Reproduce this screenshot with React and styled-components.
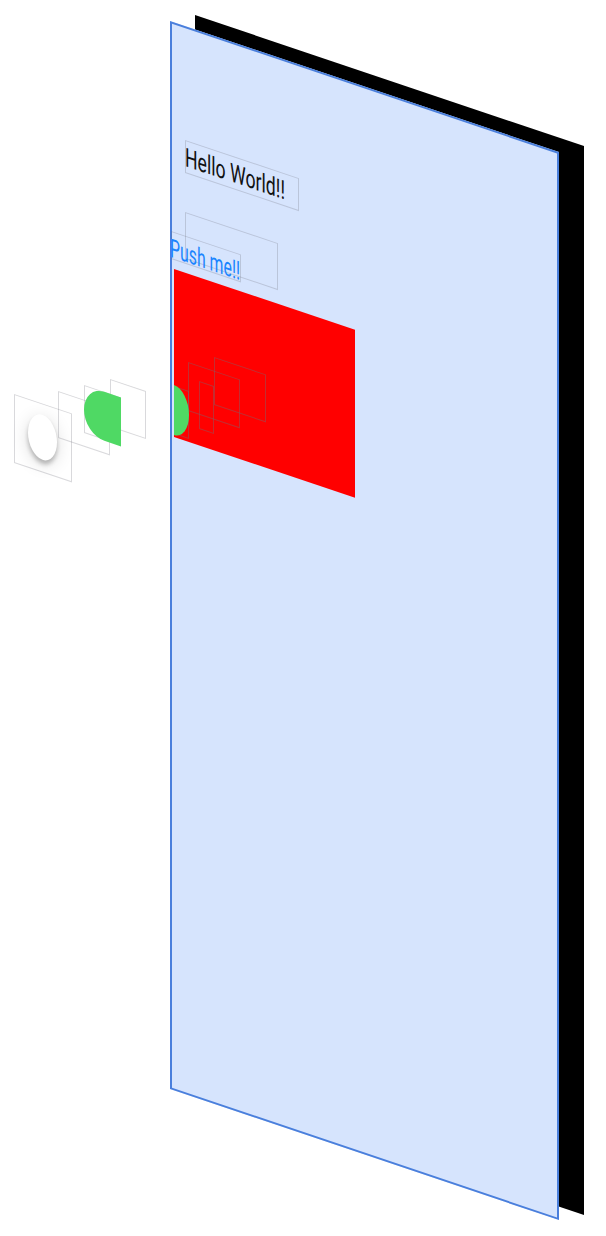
import React from "react";
import styled, { createGlobalStyle } from "styled-components";

const Global = createGlobalStyle`
  html, body { margin: 0; padding: 0; background: #fff; }
  #root { width: 606px; height: 1236px; overflow: hidden; }
`;

const Canvas = styled.div`
  position: relative;
  width: 606px;
  height: 1236px;
  background: #fff;
  overflow: hidden;
  font-family: Roboto, "Liberation Sans", sans-serif;
`;

const Layer = styled.div`
  position: absolute;
  left: ${(p) => p.$x}px;
  top: ${(p) => p.$y}px;
  width: ${(p) => p.$w}px;
  height: ${(p) => p.$h}px;
  box-sizing: border-box;
  transform-origin: 0 0;
  transform: matrix(1, ${(p) => p.$slope ?? 0.335}, 0, 1, 0, 0);
`;

const Backing = styled(Layer)`
  background: #000;
`;

const Panel = styled(Layer)`
  background: #d6e4fd;
  border: 2px solid #4a7fdc;
`;

const RedView = styled(Layer)`
  background: #ff0000;
`;

const Wire = styled(Layer)`
  border: 1.5px solid rgba(110, 110, 120, ${(p) => p.$alpha ?? 0.26});
`;

const Caption = styled(Wire)`
  display: flex;
  align-items: center;
  padding-top: ${(p) => p.$drop ?? 0}px;
  white-space: nowrap;
  font-size: ${(p) => p.$size}px;
  line-height: 1;
  color: ${(p) => p.$color};
`;

const CaptionText = styled.span`
  display: inline-block;
  margin-left: ${(p) => p.$nudge ?? 0}px;
  transform-origin: 0 50%;
  transform: scaleX(${(p) => p.$squeeze});
`;

const GreenBlob = styled(Layer)`
  background: #4fd964;
  border-radius: ${(p) => (p.$side === "right" ? "0 100% 100% 0 / 0 50% 50% 0" : "55% 0 0 55% / 50% 0 0 50%")};
`;

const Knob = styled(Layer)`
  background: #fff;
  border-radius: 50%;
  box-shadow: 0 4px 4px rgba(0, 0, 0, 0.24), 0 4px 18px rgba(0, 0, 0, 0.14);
`;

export default function App() {
  return (
    <Canvas>
      <Global />
      <Backing $x={195} $y={15} $w={389} $h={1069} $slope={0.337} />
      <Panel $x={169.5} $y={21} $w={389} $h={1068} $slope={0.337} />

      <Caption $x={185} $y={140} $w={114} $h={33} $size={26} $color="#111">
        <CaptionText $squeeze={0.68} $nudge={-1}>Hello World!!</CaptionText>
      </Caption>
      <Wire $x={185} $y={212} $w={93} $h={47} />
      <RedView $x={174} $y={269} $w={181} $h={168} />
      <Caption $x={171} $y={231} $w={70} $h={28} $size={26} $drop={6} $color="#1a84ff">
        <CaptionText $squeeze={0.61} $nudge={-2}>Push me!!</CaptionText>
      </Caption>

      <Wire $x={188} $y={362} $w={52} $h={49} $alpha={0.42} />
      <Wire $x={214} $y={357} $w={52} $h={48} $alpha={0.42} />
      <Wire $x={199} $y={381} $w={15} $h={48} $alpha={0.42} />
      <Wire $x={174} $y={386} $w={15} $h={48} $alpha={0.42} />
      <GreenBlob $x={174} $y={385} $w={15} $h={50} $side="right" />

      <Wire $x={14} $y={394} $w={58} $h={69} />
      <Knob $x={28} $y={410} $w={29} $h={45} />
      <Wire $x={58} $y={391} $w={52} $h={47} />
      <Wire $x={110} $y={379} $w={36} $h={48} />
      <Wire $x={84} $y={385} $w={37} $h={48} />
      <GreenBlob $x={84} $y={385} $w={37} $h={49} $side="left" />
    </Canvas>
  );
}
